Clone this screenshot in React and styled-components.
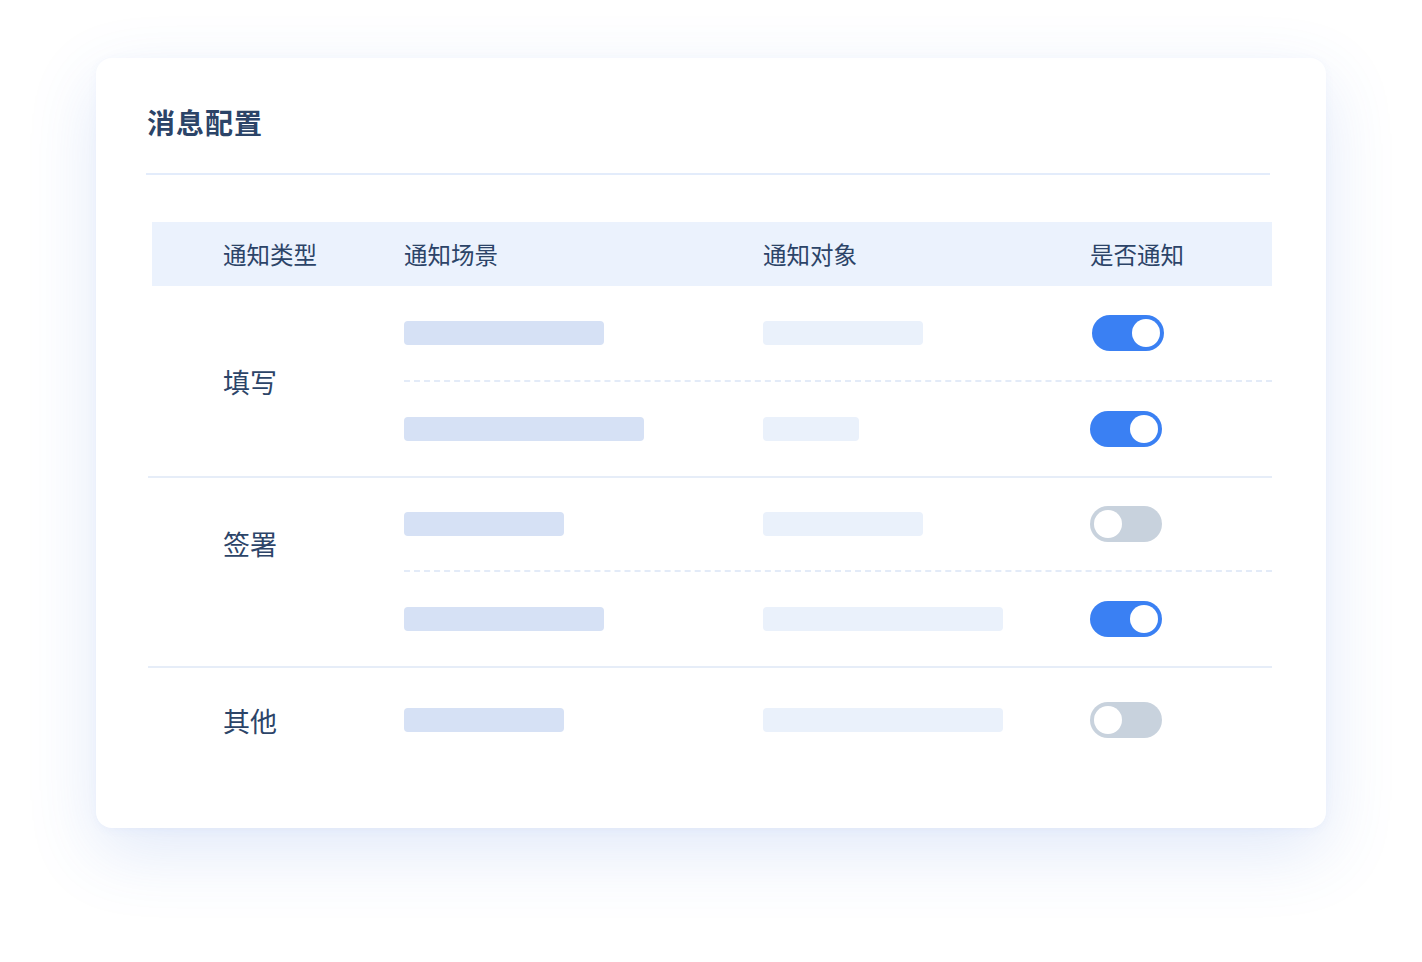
import React from 'react'
import styled, { createGlobalStyle } from 'styled-components'

const Global = createGlobalStyle`
  body {
    margin: 0;
    background: #fff;
    font-family: "Noto Sans CJK SC", "Noto Sans", sans-serif;
  }
`

const Page = styled.div`
  width: 1422px;
  height: 962px;
  padding: 58px 0 0 96px;
  box-sizing: border-box;
`

const Card = styled.div`
  width: 1230px;
  height: 770px;
  box-sizing: border-box;
  background: #fff;
  border-radius: 16px;
  box-shadow: 0 24px 70px rgba(70, 120, 220, 0.16), 0 2px 10px rgba(70, 120, 220, 0.05);
  padding: 44px 56px 0 50px;
`

const Title = styled.h1`
  margin: 0 0 0 1px;
  height: 40px;
  line-height: 40px;
  font-size: 28px;
  font-weight: 700;
  color: #2c4468;
  letter-spacing: 1px;
`

const Divider = styled.div`
  height: 2px;
  background: #e3ecfb;
  margin-top: 31px;
`

const Table = styled.div`
  width: 1120px;
  margin: 47px 0 0 6px;
`

const HeaderRow = styled.div`
  display: grid;
  grid-template-columns: 252px 359px 327px 1fr;
  height: 64px;
  align-items: center;
  background: #ebf2fd;
  font-size: 23.5px;
  color: #2c4468;
  & > span:first-child { padding-left: 71px; }
`

const Group = styled.div`
  display: flex;
  border-top: ${p => (p.first ? 'none' : '2px solid #e6edf8')};
  margin-left: ${p => (p.first ? '0' : '-4px')};
  padding-left: ${p => (p.first ? '0' : '4px')};
`

const TypeCell = styled.div`
  width: 252px;
  padding-left: 71px;
  padding-bottom: ${p => p.lift || 0}px;
  box-sizing: border-box;
  display: flex;
  align-items: center;
  font-size: 27px;
  color: #2c4468;
`

const SubRows = styled.div`
  flex: 1;
  display: flex;
  flex-direction: column;
`

const SubRow = styled.div`
  display: grid;
  grid-template-columns: 359px 327px 1fr;
  align-items: center;
  box-sizing: border-box;
  height: ${p => p.h}px;
  & + & {
    border-top: 2px dashed #e3ebf8;
  }
`

const Bar = styled.div`
  height: 24px;
  border-radius: 4px;
  background: ${p => (p.light ? '#eaf1fb' : '#d6e1f5')};
`

const Toggle = styled.div`
  width: 72px;
  height: 36px;
  border-radius: 18px;
  background: ${p => (p.on ? '#3a80f3' : '#c8d2dd')};
  position: relative;
  margin-left: ${p => p.offset || 0}px;
  &::after {
    content: '';
    position: absolute;
    top: 4px;
    left: ${p => (p.on ? '40px' : '4px')};
    width: 28px;
    height: 28px;
    border-radius: 50%;
    background: #fff;
  }
`

const groups = [
  { name: '填写', rows: [
    { s: 200, o: 160, on: true, off: 2, h: 94 },
    { s: 240, o: 96, on: true, h: 96 },
  ] },
  { name: '签署', lift: 58, rows: [
    { s: 160, o: 160, on: false, h: 92 },
    { s: 200, o: 240, on: true, h: 96 },
  ] },
  { name: '其他', rows: [{ s: 160, o: 240, on: false, h: 104 }] },
]

export default function App() {
  return (
    <Page>
      <Global />
      <Card>
        <Title>消息配置</Title>
        <Divider />
        <Table>
          <HeaderRow>
            <span>通知类型</span>
            <span>通知场景</span>
            <span>通知对象</span>
            <span>是否通知</span>
          </HeaderRow>
          {groups.map((g, i) => (
            <Group key={g.name} first={i === 0}>
              <TypeCell lift={g.lift}>{g.name}</TypeCell>
              <SubRows>
                {g.rows.map((r, j) => (
                  <SubRow key={j} h={r.h}>
                    <Bar style={{ width: r.s }} />
                    <Bar light style={{ width: r.o }} />
                    <Toggle on={r.on} offset={r.off} />
                  </SubRow>
                ))}
              </SubRows>
            </Group>
          ))}
        </Table>
      </Card>
    </Page>
  )
}
